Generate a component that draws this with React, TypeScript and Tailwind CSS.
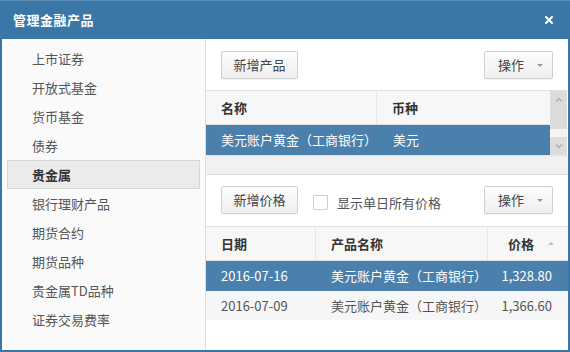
import { X } from 'lucide-react';

const menu = ['上市证券', '开放式基金', '货币基金', '债券', '贵金属', '银行理财产品', '期货合约', '期货品种', '贵金属TD品种', '证券交易费率'];

const prices = [
  { date: '2016-07-16', name: '美元账户黄金（工商银行）', price: '1,328.80', active: true },
  { date: '2016-07-09', name: '美元账户黄金（工商银行）', price: '1,366.60', active: false },
];

const Btn = ({ label, caret }: { label: string; caret?: boolean }) => (
  <button className="h-[28px] flex items-center justify-center border border-[#d0d0d0] rounded-[2px] bg-linear-to-b from-[#fdfdfd] to-[#efefef] text-[13px] text-[#444] shadow-[0_1px_0_rgba(0,0,0,0.04)]">
    {caret ? (
      <span className="w-[67px] flex items-center pl-[13px]">
        <span>{label}</span>
        <span className="ml-[13px] mt-[1px] w-0 h-0 border-l-[3px] border-r-[3px] border-t-[3px] border-l-transparent border-r-transparent border-t-[#999]" />
      </span>
    ) : (
      <span className="w-[75px] text-center">{label}</span>
    )}
  </button>
);

export default function App() {
  return (
    <div
      className="w-[570px] h-[352px] bg-[#3a76a6] flex flex-col overflow-hidden"
      style={{ fontFamily: '"Noto Sans CJK SC", "Liberation Sans", sans-serif' }}
    >
      {/* 标题栏 */}
      <div className="h-[39px] shrink-0 flex items-center justify-between pl-[13px] pr-[15px] border-t border-[#5a8fbb]">
        <span className="text-white text-[13px] font-bold tracking-[0.5px]">管理金融产品</span>
        <X className="w-[12px] h-[12px] text-white" strokeWidth={4} />
      </div>

      <div className="flex-1 min-h-0 mx-[2px] mb-[2px] flex bg-white">
        {/* 左侧菜单 */}
        <aside className="w-[204px] shrink-0 bg-[#fafafa] border-r border-[#dcdcdc] pt-[5px]">
          {menu.map((item, i) => (
            <div
              key={item}
              className={
                i === 4
                  ? 'h-[29px] mx-[5px] flex items-center pl-[24px] bg-[#ebebeb] border border-[#d6d6d6] text-[13px] font-bold text-[#333]'
                  : 'h-[29px] mx-[5px] flex items-center pl-[25px] text-[13px] text-[#555]'
              }
            >
              {item}
            </div>
          ))}
        </aside>

        {/* 右侧内容 */}
        <main className="flex-1 min-w-0 flex flex-col">
          <div className="h-[52px] shrink-0 flex items-start justify-between pt-[12px] pl-[15px] pr-[15px] border-b border-[#e2e2e2]">
            <Btn label="新增产品" />
            <Btn label="操作" caret />
          </div>

          <div className="h-[64px] shrink-0 flex">
            <div className="flex-1 min-w-0">
              <div className="h-[34px] flex bg-[#f7f7f7] border-b border-[#e0e0e0] text-[13px] font-bold text-[#333]">
                <div className="w-[171px] flex items-center pl-[15px] border-r border-[#e6e6e6]">名称</div>
                <div className="flex-1 flex items-center pl-[15px]">币种</div>
              </div>
              <div className="h-[30px] flex bg-[#4a80ab] text-[13px] text-white">
                <div className="w-[171px] flex items-center pl-[15px]">美元账户黄金（工商银行）</div>
                <div className="flex-1 flex items-center pl-[16px]">美元</div>
              </div>
            </div>
            <div className="w-[17px] shrink-0 flex flex-col bg-[#dcdcdc]">
              <div className="h-[38px] flex justify-center pt-[6px] text-[#aaa]">
                <svg width="8" height="5" viewBox="0 0 8 5"><path d="M1 4.5 L4 1.5 L7 4.5" fill="none" stroke="#aaa" strokeWidth="1.2" /></svg>
              </div>
              <div className="h-[8px] bg-[#f4f4f4]" />
              <div className="flex-1 flex justify-center items-center">
                <svg width="8" height="5" viewBox="0 0 8 5"><path d="M1 0.5 L4 3.5 L7 0.5" fill="none" stroke="#aaa" strokeWidth="1.2" /></svg>
              </div>
            </div>
            <div className="w-[1px] bg-white" />
          </div>

          <div className="h-[20px] shrink-0 bg-[#f1f1f1] border-t border-[#e4e4e4] border-b border-b-[#dedede]" />

          <div className="h-[52px] shrink-0 flex items-start pt-[11px] pl-[15px] pr-[15px] border-b border-[#e2e2e2]">
            <Btn label="新增价格" />
            <label className="ml-[15px] mt-[7px] flex items-center text-[13px] text-[#555]">
              <span className="w-[15px] h-[15px] bg-white border border-[#cfcfcf] rounded-[1px]" />
              <span className="ml-[9px]">显示单日所有价格</span>
            </label>
            <div className="ml-auto">
              <Btn label="操作" caret />
            </div>
          </div>

          <div className="flex-1 min-h-0 flex flex-col">
            <div className="h-[34px] shrink-0 flex bg-[#f7f7f7] border-b border-[#e0e0e0] text-[13px] font-bold text-[#333]">
              <div className="w-[110px] flex items-center pl-[15px] border-r border-[#e6e6e6]">日期</div>
              <div className="w-[172px] flex items-center pl-[15px] border-r border-[#e6e6e6]">产品名称</div>
              <div className="flex-1 flex items-center justify-end pr-[14px]">
                <span>价格</span>
                <span className="ml-[14px] w-0 h-0 border-l-[3px] border-r-[3px] border-b-[3px] border-l-transparent border-r-transparent border-b-[#bbb]" />
              </div>
            </div>
            {prices.map((p) => (
              <div
                key={p.date}
                className={
                  p.active
                    ? 'h-[30px] shrink-0 flex bg-[#4a80ab] text-[13px] text-white'
                    : 'h-[29px] shrink-0 flex bg-[#f6f6f6] text-[13px] text-[#555]'
                }
              >
                <div className="w-[110px] flex items-center pl-[15px]">{p.date}</div>
                <div className="w-[172px] flex items-center pl-[15px]">{p.name}</div>
                <div className="flex-1 flex items-center justify-end pr-[16px]">{p.price}</div>
              </div>
            ))}
          </div>
        </main>
      </div>
    </div>
  );
}
